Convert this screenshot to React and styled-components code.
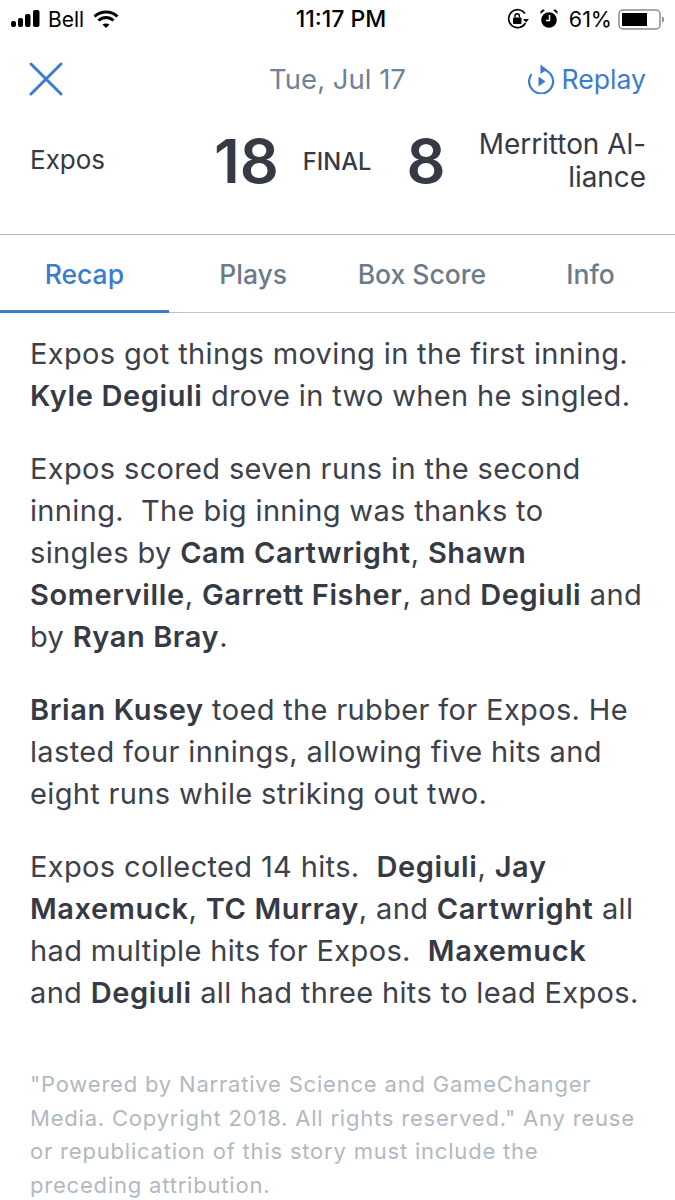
import React from 'react';
import styled, { createGlobalStyle } from 'styled-components';

const GlobalStyle = createGlobalStyle`
    html, body {
        margin: 0;
        padding: 0;
        background: #ffffff;
    }
    body {
        font-family: Inter, "Liberation Sans", sans-serif;
        overflow: hidden;
    }
`;

const Page = styled.div`
    width: 675px;
    height: 1200px;
    overflow: hidden;
    background: #ffffff;
`;

const StatusBar = styled.div`
    display: grid;
    grid-template-columns: 1fr auto 1fr;
    align-items: center;
    height: 38px;
    padding: 0 9px 0 11px;
    color: #000000;
    font-size: 21px;
`;

const StatusLeft = styled.div`
    display: flex;
    align-items: center;
    gap: 7px;
`;

const CarrierName = styled.span`
    margin-right: 2px;
`;

const StatusRight = styled.div`
    display: flex;
    align-items: center;
    justify-content: flex-end;
    gap: 11px;
`;

const BatteryGroup = styled.div`
    display: flex;
    align-items: center;
    gap: 6px;
    font-size: 21.500px;
`;

const Clock = styled.div`
    padding-left: 5px;
    font-size: 23px;
    font-weight: 500;
`;

const NavRow = styled.div`
    display: grid;
    grid-template-columns: 1fr auto 1fr;
    align-items: center;
    height: 82px;
    padding: 0 29px;
`;

const CloseButton = styled.div`
    display: flex;
    color: #3a7dcf;
`;

const DateLabel = styled.div`
    color: #6f8297;
    font-size: 27.500px;
`;

const ReplayButton = styled.div`
    display: flex;
    align-items: center;
    justify-content: flex-end;
    gap: 7px;
    color: #3a7dcf;
    font-size: 26.600px;
`;

const ScoreRow = styled.div`
    display: grid;
    grid-template-columns: auto 1fr;
    align-items: center;
    height: 78px;
    padding: 0 29px 0 30px;
    color: #353a45;
`;

const TeamName = styled.div`
    width: ${(p) => (p.$right ? 'auto' : '184px')};
    font-size: ${(p) => (p.$right ? '27.900px' : '26px')};
    line-height: 33px;
    text-align: ${(p) => (p.$right ? 'right' : 'left')};
`;

const Scores = styled.div`
    display: flex;
    align-items: center;
`;

const Score = styled.div`
    font-size: 61px;
    font-weight: 600;
    line-height: 1;
`;

const FinalLabel = styled.div`
    margin: 0 35px 0 24px;
    font-size: 23.700px;
    font-weight: 500;
`;

const ScoreSide = styled.div`
    display: grid;
    grid-template-columns: auto 1fr;
    align-items: center;
    padding-top: 4px;
`;

const Tabs = styled.div`
    display: grid;
    grid-template-columns: repeat(4, 1fr);
    margin-top: 36px;
    border-top: 1px solid #aeb4bf;
    border-bottom: 1px solid #bcc0c8;
`;

const Tab = styled.div`
    display: flex;
    align-items: center;
    justify-content: center;
    height: 78px;
    box-sizing: border-box;
    margin-bottom: -1px;
    padding-top: 3px;
    border-bottom: 3px solid ${(p) => (p.$active ? '#3a7dcf' : 'transparent')};
    color: ${(p) => (p.$active ? '#3a7dcf' : '#6b7b8c')};
    font-size: 26.500px;
    font-weight: 500;
`;

const Article = styled.div`
    padding: 20px 0 0 30px;
    white-space: nowrap;
`;

const Paragraph = styled.p`
    margin: 0 0 31px;
    color: #3c414c;
    font-size: 29px;
    line-height: 42px;
    letter-spacing: 0.35px;

    b {
        color: #353a45;
        font-weight: 600;
        letter-spacing: 0.6px;
    }
`;

const Attribution = styled.p`
    margin: 54px 0 0;
    color: #b0b9c3;
    font-size: 22px;
    line-height: 33.500px;
    letter-spacing: 0.8px;
`;

const SignalBars = () => (
    <svg width="30" height="18" viewBox="0 0 30 18" fill="#000">
        <rect x="0" y="11" width="5" height="6" rx="2" />
        <rect x="7" y="8" width="5" height="9" rx="2" />
        <rect x="14" y="4" width="5.500" height="13" rx="2" />
        <rect x="22" y="0" width="6.500" height="17" rx="2" />
    </svg>
);

const WifiIcon = () => (
    <svg width="26" height="18" viewBox="0 0 26 18" fill="none" stroke="#000" strokeWidth="3">
        <path d="M1.500 6.500C8 .5 18 .5 24.500 6.500" />
        <path d="M5.500 10.500c4.500-4 10.500-4 15 0" />
        <path d="M13 18l-3.500-3.500c2-1.500 5-1.500 7 0z" fill="#000" stroke="none" />
    </svg>
);

const RotationLock = () => (
    <svg width="22" height="22" viewBox="0 0 22 22" fill="none">
        <path d="M18.500 15A9 9 0 1 1 18 5.500" stroke="#000" strokeWidth="1.600" />
        <path d="M16 11h6l-3 3.500z" fill="#000" />
        <rect x="6" y="9.500" width="8.500" height="6.500" rx="1" fill="#000" />
        <path d="M8 9.500V8a2.200 2.200 0 0 1 4.400 0v1.500" stroke="#000" strokeWidth="1.400" />
    </svg>
);

const AlarmIcon = () => (
    <svg width="18" height="20" viewBox="0 0 18 20">
        <circle cx="9" cy="11" r="7.800" fill="#000" />
        <path d="M.5 5L5 1 2.500.5 .5 2.500zM17.500 5L13 1l2.500-.5 2 2z" fill="#000" />
        <path d="M9.500 6v5.500H6" fill="none" stroke="#fff" strokeWidth="1.400" />
    </svg>
);

const BatteryIcon = () => (
    <svg width="48" height="21" viewBox="0 0 48 21" fill="none">
        <rect x="1" y="1" width="41" height="19" rx="4" stroke="#8c8c8c" strokeWidth="1.500" />
        <rect x="4" y="4" width="25" height="13" fill="#000" />
        <path d="M44 7.500c1.500.5 2 1.500 2 3s-.5 2.500-2 3z" fill="#8c8c8c" />
    </svg>
);

const CloseIcon = () => (
    <svg width="34" height="34" viewBox="0 0 34 34" fill="none" stroke="currentColor" strokeWidth="3" strokeLinecap="round">
        <path d="M2 2l30 30M32 2L2 32" />
    </svg>
);

const ReplayIcon = () => (
    <svg width="27" height="30" viewBox="0 0 27 30" fill="none">
        <path d="M14 5.500a12 12 0 1 1-11 5.500" stroke="currentColor" strokeWidth="2.200" strokeLinecap="round" />
        <path d="M12.500 0.500l6.500 5-6.500 4.500z" fill="currentColor" />
        <path d="M10.500 12.500l7 5-7 5z" fill="currentColor" />
    </svg>
);

const App = () => (
    <Page>
        <GlobalStyle />
        <StatusBar>
            <StatusLeft>
                <SignalBars />
                <CarrierName>Bell</CarrierName>
                <WifiIcon />
            </StatusLeft>
            <Clock>11:17 PM</Clock>
            <StatusRight>
                <RotationLock />
                <AlarmIcon />
                <BatteryGroup>
                    <span>61%</span>
                    <BatteryIcon />
                </BatteryGroup>
            </StatusRight>
        </StatusBar>
        <NavRow>
            <CloseButton>
                <CloseIcon />
            </CloseButton>
            <DateLabel>Tue, Jul 17</DateLabel>
            <ReplayButton>
                <ReplayIcon />
                <span>Replay</span>
            </ReplayButton>
        </NavRow>
        <ScoreRow>
            <TeamName>Expos</TeamName>
            <ScoreSide>
                <Scores>
                    <Score>18</Score>
                    <FinalLabel>FINAL</FinalLabel>
                    <Score>8</Score>
                </Scores>
                <TeamName $right>
                    Merritton Al-
                    <br />
                    liance
                </TeamName>
            </ScoreSide>
        </ScoreRow>
        <Tabs>
            <Tab $active>Recap</Tab>
            <Tab>Plays</Tab>
            <Tab>Box Score</Tab>
            <Tab>Info</Tab>
        </Tabs>
        <Article>
            <Paragraph>
                Expos got things moving in the first inning.
                <br />
                <b>Kyle Degiuli</b> drove in two when he singled.
            </Paragraph>
            <Paragraph>
                Expos scored seven runs in the second
                <br />
                inning.&nbsp; The big inning was thanks to
                <br />
                singles by <b>Cam Cartwright</b>, <b>Shawn</b>
                <br />
                <b>Somerville</b>, <b>Garrett Fisher</b>, and <b>Degiuli</b> and
                <br />
                by <b>Ryan Bray</b>.
            </Paragraph>
            <Paragraph>
                <b>Brian Kusey</b> toed the rubber for Expos. He
                <br />
                lasted four innings, allowing five hits and
                <br />
                eight runs while striking out two.
            </Paragraph>
            <Paragraph>
                Expos collected 14 hits.&nbsp; <b>Degiuli</b>, <b>Jay</b>
                <br />
                <b>Maxemuck</b>, <b>TC Murray</b>, and <b>Cartwright</b> all
                <br />
                had multiple hits for Expos.&nbsp; <b>Maxemuck</b>
                <br />
                and <b>Degiuli</b> all had three hits to lead Expos.
            </Paragraph>
            <Attribution>
                "Powered by Narrative Science and GameChanger
                <br />
                Media. Copyright 2018. All rights reserved." Any reuse
                <br />
                or republication of this story must include the
                <br />
                preceding attribution.
            </Attribution>
        </Article>
    </Page>
);

export default App;
